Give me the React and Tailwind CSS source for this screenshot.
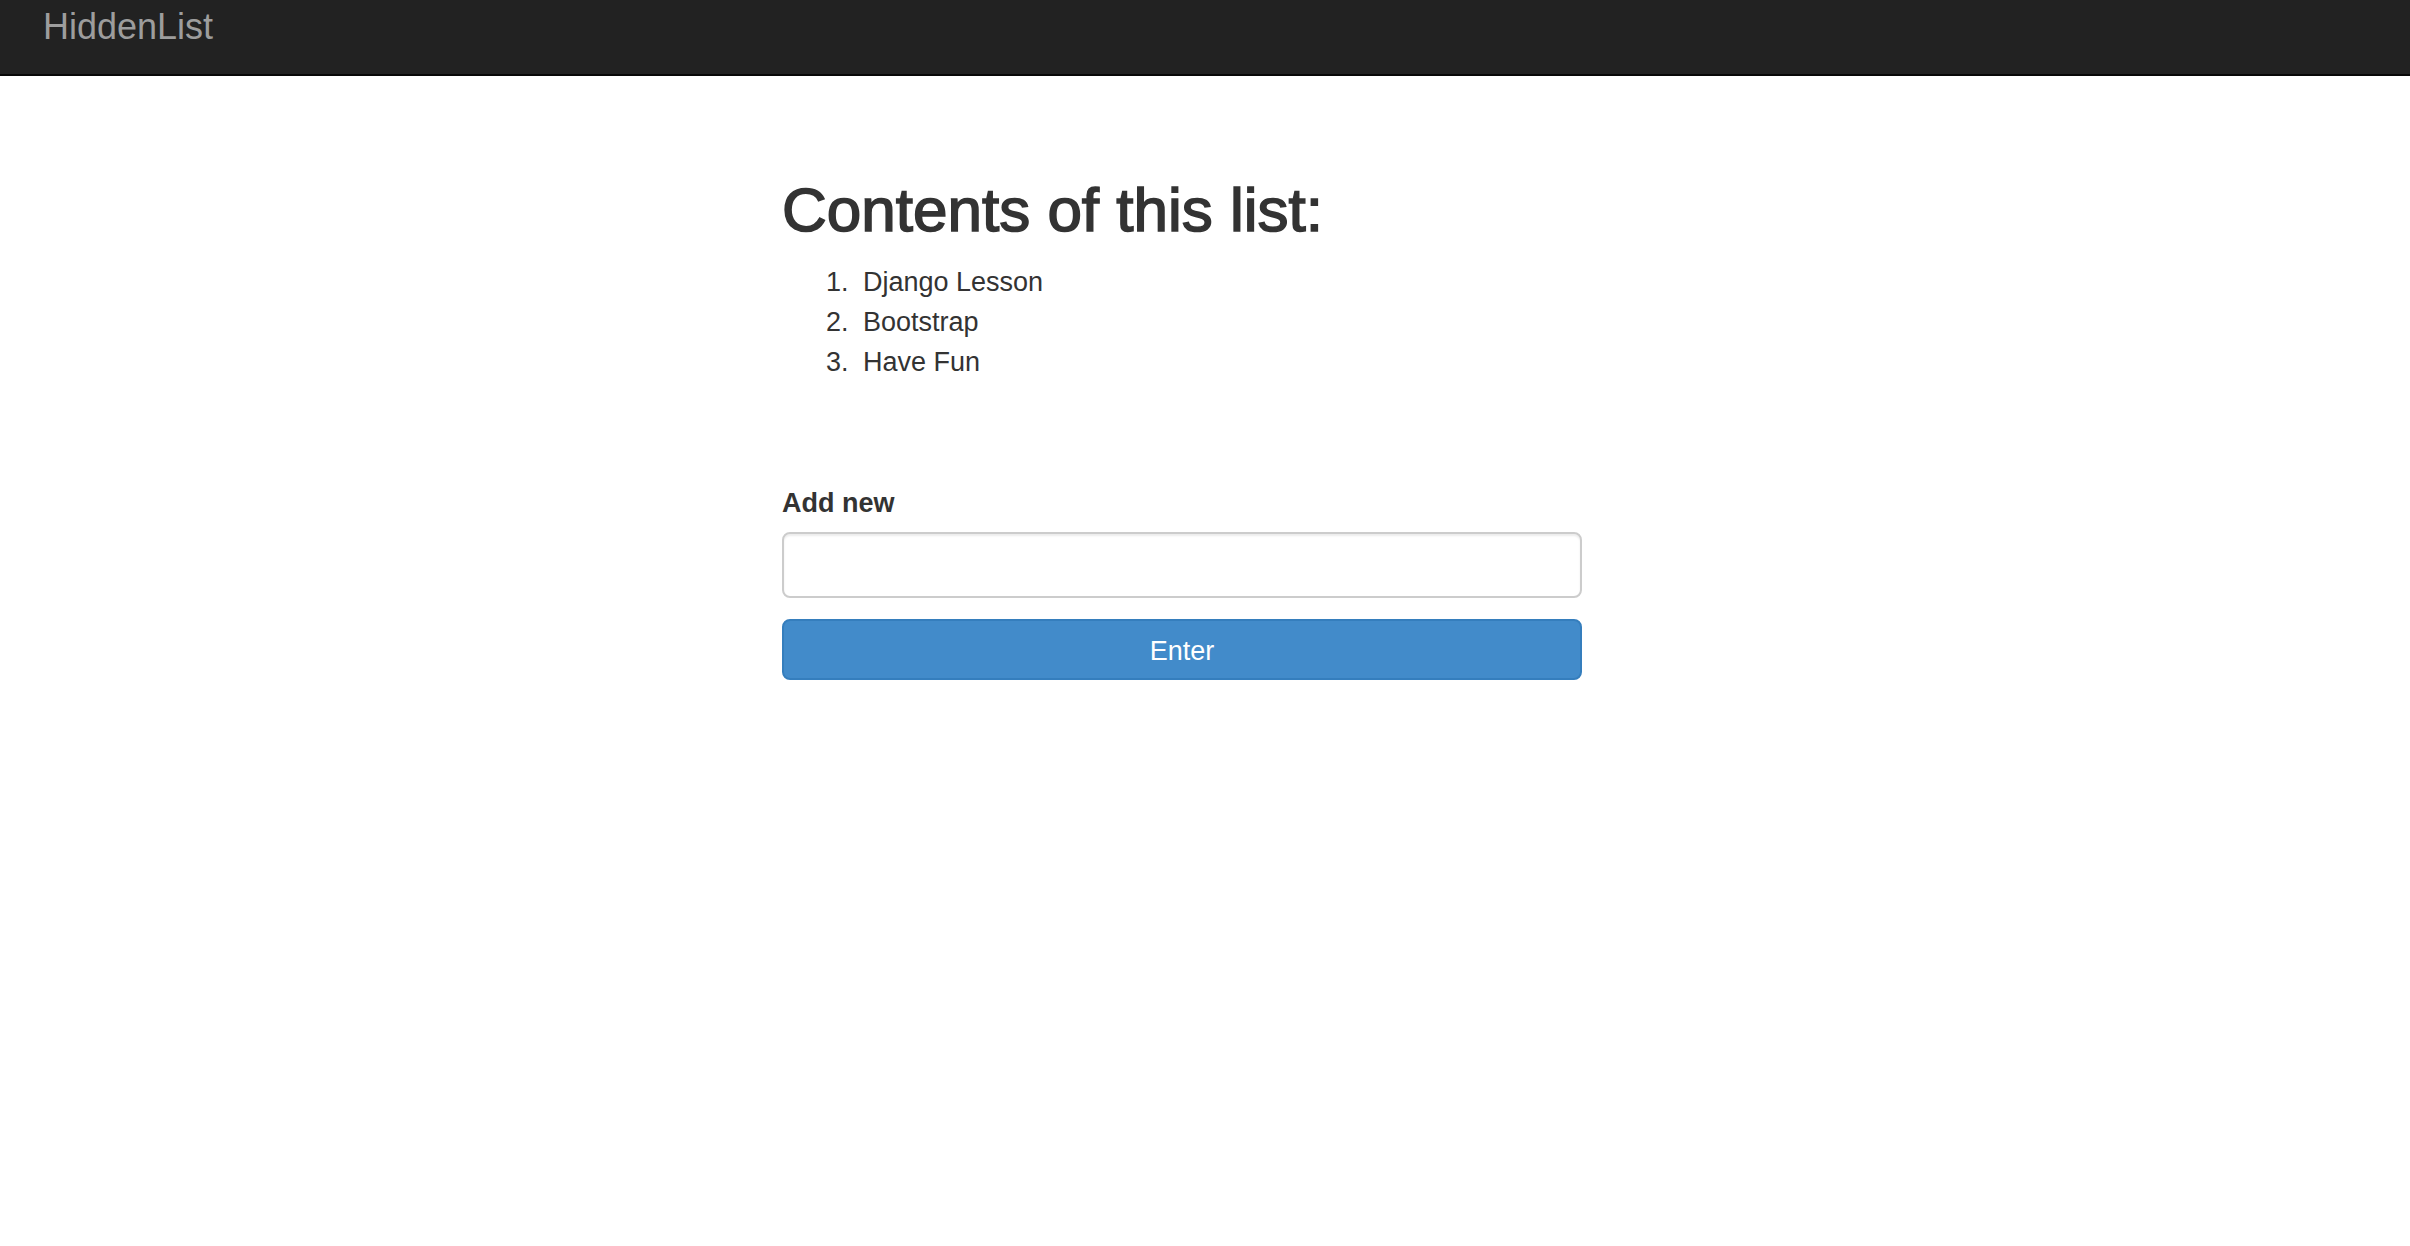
import { useState } from 'react';

const items = ['Django Lesson', 'Bootstrap', 'Have Fun'];

export default function App() {
  const [value, setValue] = useState('');

  return (
    <div className="min-h-screen bg-white text-[#333333] font-['Liberation_Sans',Arial,sans-serif]">
      {/* Navbar */}
      <nav className="h-[76px] bg-[#222222] border-b-2 border-[#080808]">
        <div className="pl-[43px] pt-[7px]">
          <a href="#" className="text-[36px] leading-[40px] text-[#9d9d9d]">
            HiddenList
          </a>
        </div>
      </nav>

      {/* Content */}
      <main className="ml-[782px] w-[800px] pt-[100px]">
        <h1 className="text-[62px] leading-[68px] font-medium [-webkit-text-stroke:1.6px_#333333]">
          Contents of this list:
        </h1>

        <ol className="mt-[18px] pl-[44px] text-[27px] leading-[40px]">
          {items.map((item, i) => (
            <li key={item} className="flex">
              <span className="w-[37px] shrink-0">{i + 1}.</span>
              <span>{item}</span>
            </li>
          ))}
        </ol>

        <form className="mt-[102px]" onSubmit={(e) => e.preventDefault()}>
          <label className="block text-[27px] leading-[38px] font-bold">Add new</label>
          <input
            type="text"
            value={value}
            onChange={(e) => setValue(e.target.value)}
            className="mt-[10px] block w-full h-[66px] px-4 text-[27px] border-2 border-[#cccccc] rounded-[8px] shadow-[inset_0_2px_2px_rgba(0,0,0,0.075)] outline-none"
          />
          <button
            type="submit"
            className="mt-[21px] flex items-center justify-center w-full h-[61px] pt-[3px] bg-[#428bca] border-2 border-[#357ebd] rounded-[8px] text-white text-[27px] leading-[1.117]"
          >
            Enter
          </button>
        </form>
      </main>
    </div>
  );
}
